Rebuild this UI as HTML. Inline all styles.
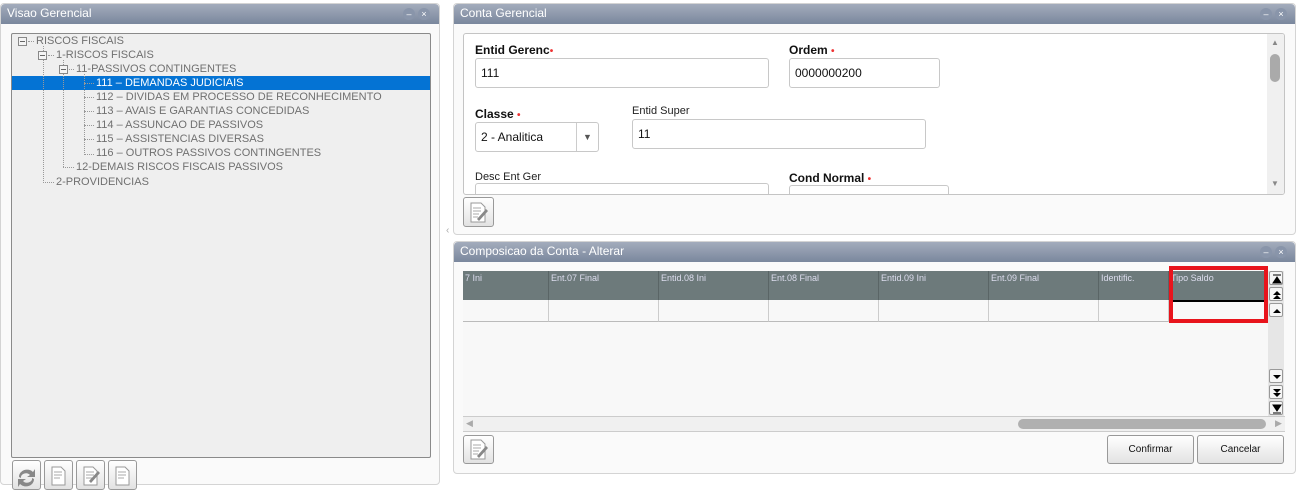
<!DOCTYPE html>
<html><head><meta charset="utf-8"><style>
*{margin:0;padding:0;box-sizing:border-box}
body{width:1299px;height:482px;background:#fff;position:relative;overflow:hidden;font-family:"Liberation Sans",sans-serif}
.abs{position:absolute}
.panel{position:absolute;background:#fafafa;border:1px solid #d4d4d4;border-radius:4px}
.title{position:absolute;left:0;right:0;top:0;height:20px;background:linear-gradient(#a3acbc,#7a879d);border-radius:4px 4px 0 0;color:#fff;font-size:12px;line-height:19px;padding-left:6px}
.tb{position:absolute;top:4px;width:12px;height:12px;border-radius:6px;background:#8995aa;color:#fff;font-size:9px;line-height:12px;text-align:center}
.tree{position:absolute;left:11px;top:33px;width:420px;height:425px;background:#efefef;border:1px solid #8a8a8a;border-radius:2px}
.tn{position:absolute;font-size:11px;color:#707070;white-space:nowrap;line-height:14px}
.box{position:absolute;width:9px;height:9px;border:1px solid #888;background:#f4f4f4}
.box:after{content:"";position:absolute;left:1px;top:3px;width:5px;height:1px;background:#666}
.vl{position:absolute;border-left:1px dotted #999}
.hl{position:absolute;border-top:1px dotted #999}
.lbl{position:absolute;font-size:12px;font-weight:bold;color:#111}
.lbl2{position:absolute;font-size:11px;color:#222}
.inp{position:absolute;border:1px solid #c8c8c8;border-radius:3px;background:#fff;font-size:12px;padding:0 5px;color:#111}
.star{color:#e33;font-size:10px}
.btn{position:absolute;border:1px solid #999;border-radius:3px;background:linear-gradient(#fff,#e2e2e2)}
.hd{position:absolute;top:271px;height:29px;background:#6d7a7b;border-right:1px solid #5a6566;color:#dde;font-size:9px;padding:2px 2px}
.cell{position:absolute;top:300px;height:22px;border-right:1px solid #ccc;border-bottom:1px solid #bbb;background:#f8f8f8}
.sb{position:absolute;left:1269px;width:14px;height:14px;border:1px solid #999;border-radius:2px;background:#f6f6f6}
.sb svg{position:absolute;left:2px;top:2px}
</style></head><body>

<div class="panel" style="left:0;top:3px;width:440px;height:482px"><div class="title">Visao Gerencial</div>
<div class="tb" style="left:402px">–</div><div class="tb" style="left:417px">×</div></div>
<div class="tree">
 <div class="abs" style="left:0;top:42px;width:418px;height:14px;background:#0473d4"></div>
 <div class="vl" style="left:31px;top:12px;height:137px"></div>
 <div class="vl" style="left:51px;top:26px;height:107px"></div>
 <div class="vl" style="left:72px;top:40px;height:81px"></div>
 <div class="hl" style="left:31px;top:148px;width:11px"></div>
 <div class="hl" style="left:51px;top:133px;width:11px"></div>
 <div class="hl" style="left:72px;top:49px;width:10px"></div>
 <div class="hl" style="left:72px;top:63px;width:10px"></div>
 <div class="hl" style="left:72px;top:77px;width:10px"></div>
 <div class="hl" style="left:72px;top:91px;width:10px"></div>
 <div class="hl" style="left:72px;top:105px;width:10px"></div>
 <div class="hl" style="left:72px;top:120px;width:10px"></div>
 <div class="hl" style="left:16px;top:7px;width:6px"></div>
 <div class="hl" style="left:36px;top:21px;width:6px"></div>
 <div class="hl" style="left:57px;top:35px;width:5px"></div>
 <div class="box" style="left:6px;top:3px"></div>
 <div class="box" style="left:26px;top:17px"></div>
 <div class="box" style="left:47px;top:31px"></div>
 <div class="tn" style="left:24px;top:0">RISCOS FISCAIS</div>
 <div class="tn" style="left:44px;top:14px">1-RISCOS FISCAIS</div>
 <div class="tn" style="left:64px;top:28px">11-PASSIVOS CONTINGENTES</div>
 <div class="tn" style="left:84px;top:42px;color:#fff">111 – DEMANDAS JUDICIAIS</div>
 <div class="tn" style="left:84px;top:56px">112 – DIVIDAS EM PROCESSO DE RECONHECIMENTO</div>
 <div class="tn" style="left:84px;top:70px">113 – AVAIS E GARANTIAS CONCEDIDAS</div>
 <div class="tn" style="left:84px;top:84px">114 – ASSUNCAO DE PASSIVOS</div>
 <div class="tn" style="left:84px;top:98px">115 – ASSISTENCIAS DIVERSAS</div>
 <div class="tn" style="left:84px;top:112px">116 – OUTROS PASSIVOS CONTINGENTES</div>
 <div class="tn" style="left:64px;top:126px">12-DEMAIS RISCOS FISCAIS PASSIVOS</div>
 <div class="tn" style="left:44px;top:141px">2-PROVIDENCIAS</div>
</div>
<div class="btn" style="left:12px;top:460px;width:29px;height:30px"><svg width="27" height="28"><path d="M6 16a8 7 0 0 1 14-5l2-3v8h-8l3-2a5 4 0 0 0-9 3z M21 18a8 7 0 0 1-14 5l-2 3v-8h8l-3 2a5 4 0 0 0 9-3z" fill="#888"/></svg></div>
<div class="btn" style="left:44px;top:460px;width:29px;height:30px"><svg width="27" height="28"><path d="M7 6h9l4 4v14H7z" fill="#fff" stroke="#999"/><path d="M9 11h8M9 14h8M9 17h6" stroke="#aaa"/></svg></div>
<div class="btn" style="left:76px;top:460px;width:29px;height:30px"><svg width="27" height="28"><path d="M7 6h9l4 4v14H7z" fill="#fff" stroke="#999"/><path d="M9 11h8M9 14h8M9 17h6" stroke="#aaa"/><path d="M12 20l9-10 2 2-9 10z" fill="#888"/></svg></div>
<div class="btn" style="left:108px;top:460px;width:29px;height:30px"><svg width="27" height="28"><path d="M7 6h9l4 4v14H7z" fill="#fff" stroke="#999"/><path d="M9 11h8M9 14h8M9 17h6" stroke="#aaa"/></svg></div>
<div class="abs" style="left:446px;top:225px;font-size:10px;color:#aaa">‹</div>

<div class="panel" style="left:453px;top:3px;width:843px;height:232px"><div class="title">Conta Gerencial</div>
<div class="tb" style="left:806px">–</div><div class="tb" style="left:821px">×</div></div>
<div class="abs" style="left:463px;top:33px;width:822px;height:162px;background:#fff;border:1px solid #c4c4c4;border-radius:3px;overflow:hidden">
 <div class="lbl" style="left:11px;top:9px">Entid Gerenc<span class="star">•</span></div>
 <div class="inp" style="left:11px;top:24px;width:294px;height:30px;line-height:28px">111</div>
 <div class="lbl" style="left:325px;top:9px">Ordem <span class="star">•</span></div>
 <div class="inp" style="left:325px;top:24px;width:151px;height:30px;line-height:28px">0000000200</div>
 <div class="lbl" style="left:11px;top:73px">Classe <span class="star">•</span></div>
 <div class="inp" style="left:11px;top:88px;width:124px;height:30px;line-height:28px">2 - Analitica<span style="position:absolute;left:100px;top:0;height:28px;border-left:1px solid #ccc"></span><span style="position:absolute;left:107px;top:0;font-size:9px;color:#555">▼</span></div>
 <div class="lbl2" style="left:168px;top:71px">Entid Super</div>
 <div class="inp" style="left:168px;top:85px;width:294px;height:30px;line-height:28px">11</div>
 <div class="lbl2" style="left:11px;top:137px">Desc Ent Ger</div>
 <div class="inp" style="left:11px;top:149px;width:294px;height:30px"></div>
 <div class="lbl" style="left:325px;top:137px">Cond Normal <span class="star">•</span></div>
 <div class="inp" style="left:325px;top:151px;width:160px;height:30px"></div>
 <div class="abs" style="left:803px;top:0;width:18px;height:160px;background:#f0f0f0"></div>
 <div class="abs" style="left:807px;top:4px;font-size:8px;color:#888">▲</div>
 <div class="abs" style="left:806px;top:20px;width:10px;height:28px;border-radius:5px;background:#aaa"></div>
 <div class="abs" style="left:807px;top:145px;font-size:8px;color:#888">▼</div>
</div>
<div class="btn" style="left:463px;top:197px;width:31px;height:30px"><svg width="29" height="28"><path d="M7 5h10l4 4v15H7z" fill="#fff" stroke="#999"/><path d="M9 10h8M9 13h8M9 16h6M9 19h5" stroke="#aaa"/><path d="M13 21l9-10 2 2-9 10z" fill="#888"/></svg></div>

<div class="panel" style="left:453px;top:241px;width:843px;height:233px"><div class="title">Composicao da Conta - Alterar</div>
<div class="tb" style="left:806px">–</div><div class="tb" style="left:821px">×</div></div>
<div class="abs" style="left:463px;top:271px;width:806px;height:160px;background:#f8f8f8"></div>
<div class="hd" style="left:463px;width:86px">7 Ini</div>
<div class="hd" style="left:549px;width:110px">Ent.07 Final</div>
<div class="hd" style="left:659px;width:110px">Entid.08 Ini</div>
<div class="hd" style="left:769px;width:110px">Ent.08 Final</div>
<div class="hd" style="left:879px;width:110px">Entid.09 Ini</div>
<div class="hd" style="left:989px;width:110px">Ent.09 Final</div>
<div class="hd" style="left:1099px;width:70px">Identific.</div>
<div class="hd" style="left:1169px;width:99px">Tipo Saldo</div>
<div class="cell" style="left:463px;width:86px"></div>
<div class="cell" style="left:549px;width:110px"></div>
<div class="cell" style="left:659px;width:110px"></div>
<div class="cell" style="left:769px;width:110px"></div>
<div class="cell" style="left:879px;width:110px"></div>
<div class="cell" style="left:989px;width:110px"></div>
<div class="cell" style="left:1099px;width:70px"></div>
<div class="cell" style="left:1169px;width:99px;border-top:2px solid #000"></div>
<div class="abs" style="left:1169px;top:266px;width:99px;height:57px;border:4px solid #e8141c"></div>
<div class="abs" style="left:1268px;top:271px;width:16px;height:145px;background:#e6e6e6"></div>
<div class="sb" style="top:271px"><svg width="10" height="10"><path d="M1 1h8M1 9l4-6 4 6z" stroke="#000" fill="#000"/></svg></div>
<div class="sb" style="top:287px"><svg width="10" height="10"><path d="M1 5l4-4 4 4zM1 9l4-4 4 4z" fill="#000"/></svg></div>
<div class="sb" style="top:303px"><svg width="10" height="10"><path d="M1 7l4-4 4 4z" fill="#000"/></svg></div>
<div class="sb" style="top:369px"><svg width="10" height="10"><path d="M1 3l4 4 4-4z" fill="#000"/></svg></div>
<div class="sb" style="top:385px"><svg width="10" height="10"><path d="M1 1l4 4 4-4zM1 5l4 4 4-4z" fill="#000"/></svg></div>
<div class="sb" style="top:401px"><svg width="10" height="10"><path d="M1 9h8M1 1l4 6 4-6z" stroke="#000" fill="#000"/></svg></div>
<div class="abs" style="left:463px;top:416px;width:822px;height:16px;background:#f0f0f0;border-top:1px solid #ccc;border-bottom:1px solid #ccc"></div>
<div class="abs" style="left:466px;top:418px;font-size:9px;color:#aaa">◀</div>
<div class="abs" style="left:1275px;top:418px;font-size:9px;color:#aaa">▶</div>
<div class="abs" style="left:1018px;top:419px;width:248px;height:10px;border-radius:5px;background:#b0b0b0"></div>
<div class="btn" style="left:463px;top:435px;width:31px;height:29px"><svg width="29" height="27"><path d="M7 4h10l4 4v15H7z" fill="#fff" stroke="#999"/><path d="M9 9h8M9 12h8M9 15h6M9 18h5" stroke="#aaa"/><path d="M13 20l9-10 2 2-9 10z" fill="#888"/></svg></div>
<div class="btn" style="left:1107px;top:435px;width:87px;height:29px;font-size:10px;line-height:27px;text-align:center;color:#111">Confirmar</div>
<div class="btn" style="left:1197px;top:435px;width:87px;height:29px;font-size:10px;line-height:27px;text-align:center;color:#111">Cancelar</div>
</body></html>
